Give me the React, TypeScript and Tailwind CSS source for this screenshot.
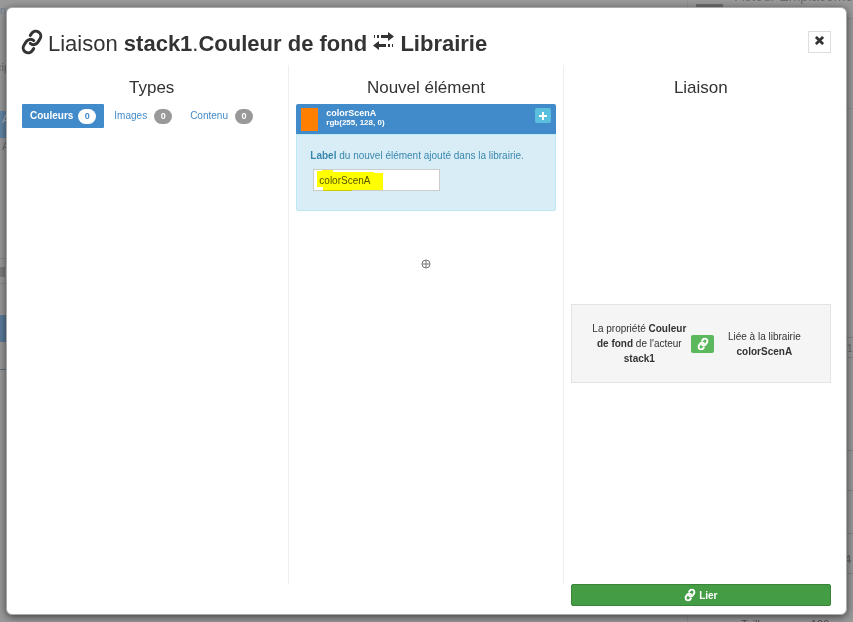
import React from "react";
import { Link } from "lucide-react";

function TransferIcon() {
  return (
    <svg viewBox="0 0 21 18" className="inline-block h-[18px] w-[21px] align-[1px]" fill="currentColor" aria-hidden="true">
      <path d="M1 3h1v3H1zM4 3h2v3H4zM8 3h7V0l6 4.500L15 9V6H8z" />
      <path d="M20 12h-1v3h1zM17 12h-2v3h2zM13 12H6V9l-6 4.500L6 18v-3h7z" />
    </svg>
  );
}

function Backdrop() {
  return (
    <div aria-hidden="true" className="absolute inset-0 overflow-hidden bg-[#9a9a9a] text-[11px] leading-4 text-[#6c6c6c]">
      <span className="absolute left-[-6px] top-[2px] text-[#6d7f93]">on</span>
      <span className="absolute left-[-4px] top-[59px]">cip</span>
      <div className="absolute left-0 top-[111px] h-[27px] w-5 bg-[#6286a6]" />
      <span className="absolute left-[2px] top-[111px] text-[#a9b4bd]">A</span>
      <span className="absolute left-[2px] top-[138px]">A</span>
      <div className="absolute left-0 top-[258px] h-px w-5 bg-[#8a8a8a]" />
      <div className="absolute left-0 top-[267px] h-[10px] w-[5px] bg-[#7d7d7d]" />
      <div className="absolute left-0 top-[283px] h-px w-5 bg-[#8a8a8a]" />
      <div className="absolute left-0 top-[315px] h-[27px] w-5 bg-[#5a7c9b]" />
      <div className="absolute left-0 top-[369px] h-px w-5 bg-[#5d6f80]" />
      <div className="absolute right-[165px] top-0 h-full w-px bg-[#8f8f8f]" />
      <div className="absolute right-[130px] top-1 h-4 w-[27px] bg-[#6e6e6e]" />
      <span className="absolute right-0 top-[-12px] w-[118px] whitespace-nowrap text-[14px]">Acteur Emplacement</span>
      <div className="absolute right-0 top-[616px] flex h-4 w-[112px] text-[#4e4e4e]">
        <span className="w-[48px]">Taille</span>
        <span className="w-[22px]">↑</span>
        <span className="w-[27px]">100</span>
        <span>px</span>
      </div>
      <span className="absolute right-[-6px] top-[340px]">10</span>
      <span className="absolute right-[2px] top-[551px] font-bold">4</span>
      <div className="absolute right-0 top-[18px] h-px w-5 bg-[#8c8c8c]" />
      <div className="absolute right-0 top-[108px] h-px w-5 bg-[#8c8c8c]" />
      <div className="absolute right-0 top-[337px] h-px w-5 bg-[#858585]" />
      <div className="absolute right-0 top-[357px] h-px w-5 bg-[#858585]" />
      <div className="absolute right-0 top-[450px] h-px w-5 bg-[#858585]" />
      <div className="absolute right-0 top-[490px] h-px w-5 bg-[#858585]" />
      <div className="absolute right-0 top-[533px] h-px w-5 bg-[#858585]" />
      <div className="absolute right-0 top-[573px] h-px w-5 bg-[#858585]" />
    </div>
  );
}

const types = [
  { label: "Couleurs", count: 0, active: true },
  { label: "Images", count: 0, active: false },
  { label: "Contenu", count: 0, active: false },
];

function TypeTabs() {
  return (
    <nav className="flex gap-[2px]">
      {types.map((type) => (
        <a
          key={type.label}
          href="#"
          className={
            type.active
              ? "flex h-6 items-center gap-[5px] rounded-[1px] bg-[#428bca] px-2 text-[10px] font-bold text-white"
              : "flex h-6 items-center gap-[7px] px-2 text-[10px] text-[#428bca]"
          }
        >
          <span className="pb-px">{type.label}</span>
          <span
            className={
              type.active
                ? "h-[15px] w-[18px] rounded-full bg-white text-center text-[9px] font-bold leading-[15px] text-[#428bca]"
                : "h-[15px] w-[18px] rounded-full bg-[#999] text-center text-[9px] font-bold leading-[15px] text-white"
            }
          >
            {type.count}
          </span>
        </a>
      ))}
    </nav>
  );
}

function NewElement() {
  return (
    <div>
      <div className="flex h-[30px] rounded-t-[2px] bg-[#428bca] px-[5px] text-white">
        <div className="mt-1 h-[23px] w-[17px] bg-[#ff8000]" />
        <div className="ml-2 flex-1 pt-1 font-bold">
          <p className="text-[9px] leading-[10px]">colorScenA</p>
          <p className="text-[8px] leading-[10px]">rgb(255, 128, 0)</p>
        </div>
        <button type="button" aria-label="Ajouter" className="mt-1 flex h-[15px] w-4 items-center justify-center rounded-[2px] bg-[#5bc0de]">
          <svg viewBox="0 0 8 8" className="h-2 w-2" fill="currentColor" aria-hidden="true">
            <path d="M3 0h2v3h3v2H5v3H3V5H0V3h3z" />
          </svg>
        </button>
      </div>
      <div className="h-[77px] rounded-b-[2px] border border-[#bce8f1] bg-[#d9edf7] px-[13px] pt-[13px]">
        <label htmlFor="element-label" className="block text-[10px] leading-4 text-[#3a87ad]">
          <b>Label</b> du nouvel élément ajouté dans la librairie.
        </label>
        <div className="relative ml-[3px] mt-[5px] h-[22px] w-[127px]">
          <input
            id="element-label"
            type="text"
            defaultValue="colorScenA"
            className="block h-[22px] w-full border border-[#ccc] bg-white px-[5px] text-[10px] text-[#555]"
          />
          <svg viewBox="0 0 67 22" className="pointer-events-none absolute left-1 top-0 h-[22px] w-[67px] mix-blend-multiply" fill="#ff0" aria-hidden="true">
            <path d="M0 2h5V1h11v2h41v1h9v17H35v1H6v-4H0z" />
          </svg>
        </div>
      </div>
    </div>
  );
}

function Summary() {
  return (
    <div className="flex h-[79px] items-center justify-center border border-[#e3e3e3] bg-[#f5f5f5] text-center text-[10px] leading-[15px] text-[#333]">
      <p className="w-[104px]">
        La propriété <b>Couleur de fond</b> de l'acteur <b>stack1</b>
      </p>
      <span className="flex h-[18px] w-[23px] items-center justify-center rounded-[2px] bg-[#5cb85c] text-white">
        <Link className="h-3 w-3 -rotate-12" strokeWidth={4} aria-hidden="true" />
      </span>
      <p className="w-[100px]">
        Liée à la librairie <b>colorScenA</b>
      </p>
    </div>
  );
}

export default function App() {
  return (
    <div className="relative flex min-h-screen px-[6px] py-[7px] font-['Liberation_Sans',Arial,sans-serif] text-[#333]">
      <Backdrop />
      <section role="dialog" aria-label="Liaison" className="relative flex flex-1 flex-col rounded-[6px] border border-[#aaa] bg-white p-2 pt-0 shadow-[0_2px_8px_rgba(0,0,0,0.6)]">
        <header className="flex items-center justify-between pb-[7px] pl-[5px] pr-[7px] pt-[22px]">
          <h1 className="flex flex-1 items-center gap-1 text-[22px] leading-6">
            <Link className="mb-1 h-6 w-6 -rotate-12" strokeWidth={3} aria-hidden="true" />
            <span>
              Liaison <b>stack1</b>.<b>Couleur de fond</b> <TransferIcon /> <b>Librairie</b>
            </span>
          </h1>
          <button type="button" aria-label="Fermer" className="mb-1 flex h-[22px] w-[23px] items-center justify-center border border-[#ddd] pb-[3px]">
            <svg viewBox="0 0 10 10" className="h-[9px] w-[9px]" stroke="currentColor" strokeWidth="3" aria-hidden="true">
              <path d="M1 1l8 8M9 1l-8 8" />
            </svg>
          </button>
        </header>
        <main className="grid flex-1 grid-cols-3">
          <div className="mb-[22px] border-r border-[#eee] px-[7px]">
            <h2 className="mb-[5px] pt-3 text-center text-[17px] leading-[22px]">Types</h2>
            <TypeTabs />
          </div>
          <div className="mb-[22px] border-r border-[#eee] px-[7px]">
            <h2 className="mb-[5px] pt-3 text-center text-[17px] leading-[22px]">Nouvel élément</h2>
            <NewElement />
            <div className="mt-12 flex justify-center">
              <svg viewBox="0 0 10 10" className="h-[10px] w-[10px]" fill="none" stroke="#777" aria-hidden="true">
                <path d="M5 1v8M1 5h8" />
                <circle cx="5" cy="5" r="4" />
              </svg>
            </div>
          </div>
          <div className="flex flex-col px-[7px]">
            <h2 className="pt-3 text-center text-[17px] leading-[22px]">Liaison</h2>
            <div className="flex flex-1 flex-col justify-center pt-1">
              <Summary />
            </div>
            <button type="button" className="flex h-[22px] items-center justify-center gap-[3px] rounded-[2px] border border-[#398439] bg-[#449d44] text-[10px] font-bold text-white">
              <Link className="h-3 w-3 -rotate-12" strokeWidth={4} aria-hidden="true" />
              Lier
            </button>
          </div>
        </main>
      </section>
    </div>
  );
}
